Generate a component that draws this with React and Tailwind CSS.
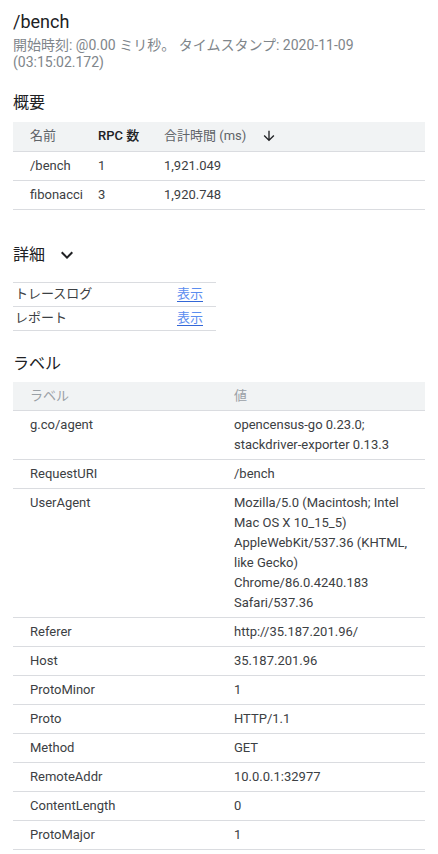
const summary = [
  { name: '/bench', count: '1', total: '1,921.049' },
  { name: 'fibonacci', count: '3', total: '1,920.748' },
];

const labels = [
  { key: 'g.co/agent', value: ['opencensus-go 0.23.0;', 'stackdriver-exporter 0.13.3'] },
  { key: 'RequestURI', value: ['/bench'] },
  {
    key: 'UserAgent',
    value: [
      'Mozilla/5.0 (Macintosh; Intel',
      'Mac OS X 10_15_5)',
      'AppleWebKit/537.36 (KHTML,',
      'like Gecko)',
      'Chrome/86.0.4240.183',
      'Safari/537.36',
    ],
  },
  { key: 'Referer', value: ['http://35.187.201.96/'] },
  { key: 'Host', value: ['35.187.201.96'] },
  { key: 'ProtoMinor', value: ['1'] },
  { key: 'Proto', value: ['HTTP/1.1'] },
  { key: 'Method', value: ['GET'] },
  { key: 'RemoteAddr', value: ['10.0.0.1:32977'] },
  { key: 'ContentLength', value: ['0'] },
  { key: 'ProtoMajor', value: ['1'] },
];

const ArrowDown = () => (
  <svg width="16" height="16" viewBox="0 0 24 24" className="inline-block">
    <path d="M20 12l-1.41-1.41L13 16.17V4h-2v12.17l-5.58-5.59L4 12l8 8 8-8z" fill="#202124" />
  </svg>
);

const Chevron = () => (
  <svg width="24" height="24" viewBox="0 0 24 24" className="inline-block">
    <path d="M16.59 8.59L12 13.17 7.41 8.59 6 10l6 6 6-6z" fill="#202124" />
  </svg>
);

const App = () => {
  return (
    <div
      className="min-h-[854px] bg-white px-[13px] pt-[11px] text-[#3c4043]"
      style={{ fontFamily: 'Roboto, "Noto Sans CJK JP", sans-serif' }}
    >
      <h1 className="text-[18px] leading-[22px] text-[#202124]">/bench</h1>
      <p className="mt-[4px] text-[14px] leading-[17px] text-[#80868b]">
        開始時刻: @0.00 ミリ秒。 タイムスタンプ: 2020-11-09 (03:15:02.172)
      </p>

      {/* Summary */}
      <h2 className="mt-[22px] text-[16px] leading-[20px] text-[#202124]">概要</h2>
      <table className="mt-[9px] w-full border-collapse text-[13px] leading-[20px]">
        <thead>
          <tr className="h-[29px] border-b border-[#dadce0] bg-[#f1f3f4] text-left">
            <th className="w-[85px] pl-[17px] font-normal text-[#5f6368]">名前</th>
            <th className="w-[66px] font-medium text-[#202124]">RPC 数</th>
            <th className="font-normal text-[#5f6368]">
              <span className="inline-flex items-center gap-[15px]">
                合計時間 (ms)
                <ArrowDown />
              </span>
            </th>
          </tr>
        </thead>
        <tbody>
          {summary.map((row) => (
            <tr key={row.name} className="h-[29px] border-b border-[#dadce0]">
              <td className="pl-[17px]">{row.name}</td>
              <td>{row.count}</td>
              <td>{row.total}</td>
            </tr>
          ))}
        </tbody>
      </table>

      {/* Details */}
      <div className="mt-[33px] flex items-center gap-[10px]">
        <h2 className="text-[16px] leading-[20px] text-[#202124]">詳細</h2>
        <Chevron />
      </div>
      <table className="mt-[15px] w-[203px] border-collapse border-t border-[#dadce0] text-[13px] leading-[20px]">
        <tbody>
          {['トレースログ', 'レポート'].map((name) => (
            <tr key={name} className="h-[24px] border-b border-[#dadce0]">
              <td className="pl-[2px] text-[#3c4043]">{name}</td>
              <td className="pr-[13px] text-right">
                <a
                  href="#"
                  className="text-[#5b8def] underline decoration-[#3367d6] underline-offset-[3px]"
                >
                  表示
                </a>
              </td>
            </tr>
          ))}
        </tbody>
      </table>

      {/* Labels */}
      <h2 className="mt-[23px] text-[16px] leading-[20px] text-[#202124]">ラベル</h2>
      <table className="mt-[8px] w-full border-collapse text-[13px] leading-[20px]">
        <thead>
          <tr className="h-[29px] border-b border-[#dadce0] bg-[#f1f3f4] text-left">
            <th className="w-[221px] pl-[17px] font-normal text-[#9aa0a6]">ラベル</th>
            <th className="font-normal text-[#9aa0a6]">値</th>
          </tr>
        </thead>
        <tbody>
          {labels.map((row) => (
            <tr key={row.key} className="border-b border-[#dadce0] align-top">
              <td className="py-[4px] pl-[17px]">{row.key}</td>
              <td className="py-[4px]">
                {row.value.map((line) => (
                  <div key={line}>{line}</div>
                ))}
              </td>
            </tr>
          ))}
        </tbody>
      </table>
    </div>
  );
};

export default App;
